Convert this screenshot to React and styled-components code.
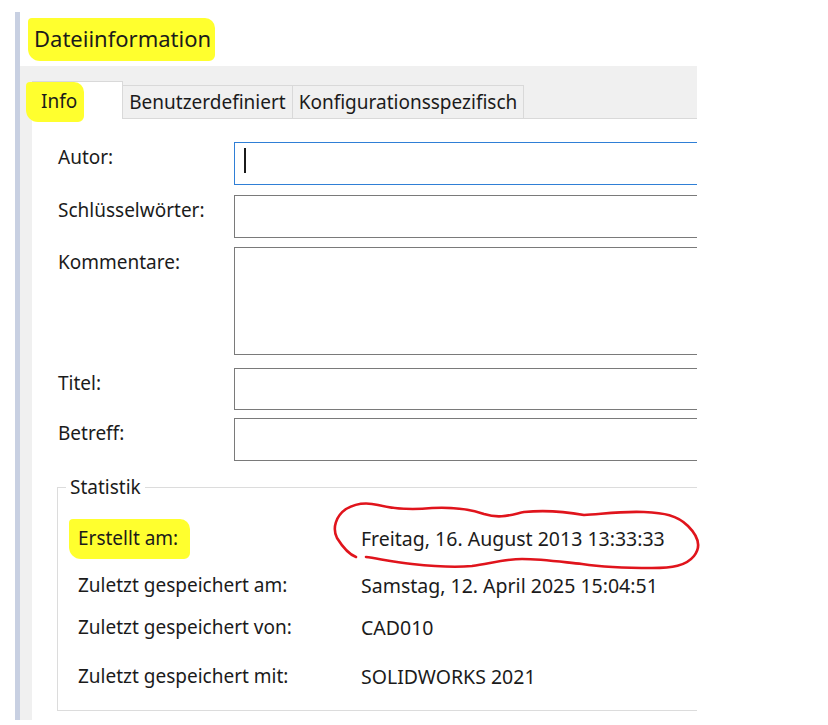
import styled, { createGlobalStyle } from 'styled-components';

const GlobalStyle = createGlobalStyle`
    body {
        margin: 0;
        background: #ffffff;
        font-family: 'Noto Sans', 'Open Sans', sans-serif;
        color: #1b1b1b;
    }
`;

const fields = [
    { label: 'Autor:', height: 43, gap: 0, focused: true },
    { label: 'Schlüsselwörter:', height: 43, gap: 10 },
    { label: 'Kommentare:', height: 108, gap: 9 },
    { label: 'Titel:', height: 42, gap: 13 },
    { label: 'Betreff:', height: 43, gap: 8 },
];

const stats = [
    { label: 'Erstellt am:', value: 'Freitag, 16. August 2013 13:33:33', mark: true, height: 48 },
    { label: 'Zuletzt gespeichert am:', value: 'Samstag, 12. April 2025 15:04:51', height: 46 },
    { label: 'Zuletzt gespeichert von:', value: 'CAD010', height: 38 },
    { label: 'Zuletzt gespeichert mit:', value: 'SOLIDWORKS 2021', height: 60 },
];

function App() {
    return (
        <Page>
            <GlobalStyle />
            <Frame>
                <TitleBar>
                    <Marker $pad="5px 4px 8px 6px" $shift="-6px">Dateiinformation</Marker>
                </TitleBar>
                <Body>
                    <TabStrip>
                        <Tab $active>
                            <Marker $pad="6px 7px 8px 15px" $shift="-16px">Info</Marker>
                        </Tab>
                        <Tab>Benutzerdefiniert</Tab>
                        <Tab>Konfigurationsspezifisch</Tab>
                    </TabStrip>
                    <Panel>
                        {fields.map((f) => (
                            <FieldRow key={f.label} $gap={f.gap}>
                                <Label>{f.label}</Label>
                                <Input $height={f.height} $focused={f.focused}>
                                    {f.focused && <Caret />}
                                </Input>
                            </FieldRow>
                        ))}
                        <Group>
                            <Legend>Statistik</Legend>
                            {stats.map((s) => (
                                <StatRow key={s.label} $height={s.height}>
                                    <StatLabel>
                                        {s.mark ? (
                                            <Marker $pad="6px 12px 8px 9px" $shift="-9px">{s.label}</Marker>
                                        ) : (
                                            s.label
                                        )}
                                    </StatLabel>
                                    <StatValue>{s.value}</StatValue>
                                </StatRow>
                            ))}
                            <Circle viewBox="0 0 380 80" width="380" height="80">
                                <path
                                    d="M24 59 C16 56 10 48 5 40 C0 30 4 18 14 11 C24 5 34 4 46 7 C62 11 80 12 100 10 C122 9 138 11 152 16 C168 21 178 17 192 14 C212 12 230 13 252 17 C270 16 290 13 312 14 C332 15 345 17 356 28 C366 38 370 48 362 58 C354 68 340 70 320 70 C296 70 270 69 250 66 C230 64 210 61 190 61 C174 61 160 65 140 68 C120 70 98 68 80 66 C60 64 44 60 34 59"
                                    fill="none"
                                    stroke="#e0141c"
                                    strokeWidth="2.6"
                                    strokeLinecap="round"
                                />
                            </Circle>
                        </Group>
                    </Panel>
                </Body>
            </Frame>
        </Page>
    );
}

export default App;

const Page = styled.div`
    padding: 12px 0 0 15px;
    width: 682px;
`;

const Frame = styled.div`
    border-left: 5px solid #c8d0e2;
    height: 708px;
    display: flex;
    flex-direction: column;
`;

const TitleBar = styled.div`
    height: 54px;
    padding-left: 14px;
    display: flex;
    align-items: center;
    font-size: 22px;
`;

const Marker = styled.span`
    position: relative;
    background: #ffff2e;
    padding: ${(p) => p.$pad};
    margin-left: ${(p) => p.$shift};
    border-radius: 4px 10px 6px 12px;
`;

const Body = styled.div`
    flex: 1;
    background: #f0f0f0;
    padding-left: 12px;
    display: flex;
    flex-direction: column;
`;

const TabStrip = styled.div`
    height: 52px;
    display: flex;
    align-items: flex-end;
    border-bottom: 1px solid #d9d9d9;
    font-size: 19px;
`;

const Tab = styled.div`
    height: ${(p) => (p.$active ? '38px' : '33px')};
    box-sizing: border-box;
    padding: ${(p) => (p.$active ? '6px 38px 0 9px' : '3px 6px 0 6px')};
    margin-bottom: ${(p) => (p.$active ? '-1px' : '0')};
    background: ${(p) => (p.$active ? '#ffffff' : '#f0f0f0')};
    border: 1px solid #d9d9d9;
    border-bottom: none;
    border-left: ${(p) => (p.$active ? '1px solid #d9d9d9' : 'none')};
    white-space: nowrap;
`;

const Panel = styled.div`
    flex: 1;
    background: #ffffff;
    padding: 23px 0 8px 26px;
    display: flex;
    flex-direction: column;
`;

const FieldRow = styled.div`
    display: flex;
    margin-top: ${(p) => p.$gap}px;
`;

const Label = styled.div`
    width: 176px;
    line-height: 30px;
    font-size: 19px;
`;

const Input = styled.div`
    flex: 1;
    height: ${(p) => p.$height}px;
    box-sizing: border-box;
    border: 1px solid ${(p) => (p.$focused ? '#2f7fd6' : '#7a7a7a')};
    border-right: none;
    padding: 5px 0 0 9px;
`;

const Caret = styled.div`
    width: 1.5px;
    height: 25px;
    background: #1b1b1b;
`;

const Group = styled.div`
    position: relative;
    margin-top: 26px;
    margin-left: -1px;
    border: 1px solid #dcdcdc;
    border-right: none;
    padding: 26px 0 0 20px;
    height: 224px;
    box-sizing: border-box;
    font-size: 19px;
`;

const Legend = styled.div`
    position: absolute;
    top: -13px;
    left: 8px;
    padding: 0 4px;
    background: #ffffff;
    line-height: 24px;
`;

const StatRow = styled.div`
    display: flex;
    align-items: center;
    height: ${(p) => p.$height}px;
`;

const StatLabel = styled.div`
    width: 283px;
`;

const StatValue = styled.div`
    position: relative;
    z-index: 1;
    font-size: 19.5px;
`;

const Circle = styled.svg`
    position: absolute;
    left: 274px;
    top: 10px;
    pointer-events: none;
`;
